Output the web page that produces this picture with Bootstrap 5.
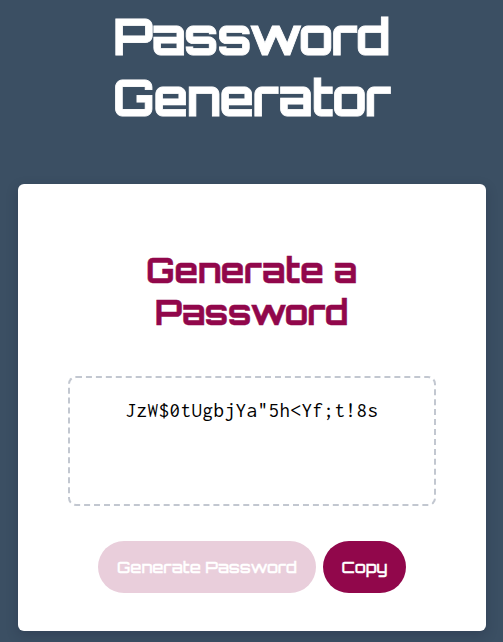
<!DOCTYPE html>
<html lang="en">
<head>
<meta charset="utf-8">
<meta name="viewport" content="width=device-width, initial-scale=1">
<title>Password Generator</title>
<link href="https://cdn.jsdelivr.net/npm/bootstrap@5.3.0/dist/css/bootstrap.min.css" rel="stylesheet">
<style>
body { background: #3b4f63; font-family: Orbitron, "DejaVu Sans", sans-serif; overflow: hidden; }
.page { padding: 5px 17px 11px 18px; height: 642px; }
.page-title { font-size: 50.5px; line-height: 61px; font-weight: 700; height: 179px; color: #fff; letter-spacing: -1.5px; padding-right: 2px; -webkit-text-stroke: .8px #fff; }
.page-title span, .panel-title span { display: block; white-space: nowrap; }
.panel { border: 0; border-radius: 6px; box-shadow: 0 4px 12px rgba(30, 38, 60, .3); padding: 65px 50px 38px; height: 447px; }
.panel-title { color: #91074b; font-size: 34.5px; line-height: 42px; font-weight: 700; height: 127px; letter-spacing: -.45px; padding-right: 1px; -webkit-text-stroke: .5px #91074b; }
.secret { width: 368px; height: 130px; border: 2px dashed #c2c7d0; border-radius: 8px; padding: 18px 0; resize: none; overflow: hidden; outline: 0; color: #000; background: #fff; font: 21px/28px Consolas, Inconsolata, "DejaVu Sans Mono", monospace; letter-spacing: .5px; }
.actions { gap: 7px; margin-top: 35px; }
.btn-pill { --bs-btn-color: #fff; --bs-btn-bg: #91074b; --bs-btn-border-color: transparent; --bs-btn-hover-color: #fff; --bs-btn-hover-bg: #7a053f; --bs-btn-disabled-color: #fff; --bs-btn-disabled-bg: #e9cedb; --bs-btn-disabled-border-color: transparent; --bs-btn-disabled-opacity: 1; height: 52px; padding: 0; border: 0; border-radius: 28px; font-size: 16px; font-weight: 500; white-space: nowrap; -webkit-text-stroke: .3px #fff; }
.btn-generate { width: 218px; }
.btn-copy { width: 83px; }
</style>
</head>
<body>
<div class="page d-flex flex-column">
  <h1 class="page-title text-center m-0"><span>Password</span><span>Generator</span></h1>
  <main class="panel card">
    <h2 class="panel-title text-center m-0"><span>Generate a</span><span>Password</span></h2>
    <textarea class="secret text-center d-block" readonly aria-label="Your secure password">JzW$0tUgbjYa"5h&lt;Yf;t!8s</textarea>
    <div class="actions d-flex justify-content-center">
      <button class="btn btn-pill btn-generate" disabled>Generate Password</button>
      <button class="btn btn-pill btn-copy">Copy</button>
    </div>
  </main>
</div>
<script src="https://cdn.jsdelivr.net/npm/bootstrap@5.3.0/dist/js/bootstrap.bundle.min.js"></script>
</body>
</html>
